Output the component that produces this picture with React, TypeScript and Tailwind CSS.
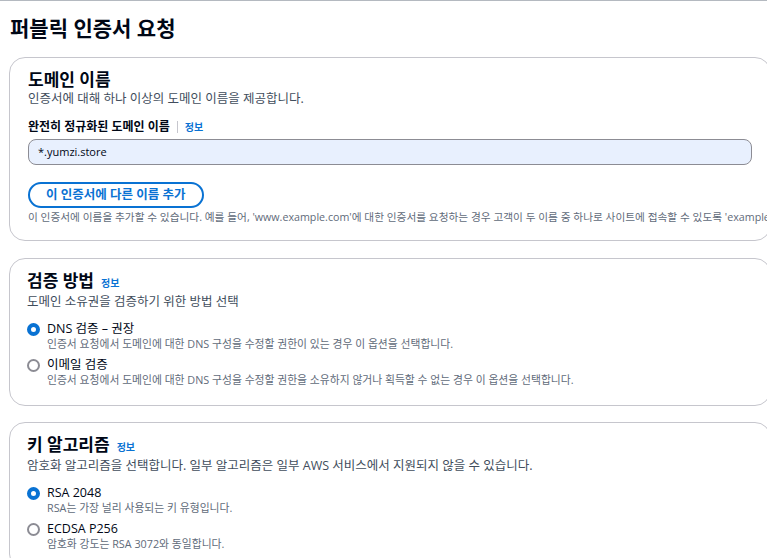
import React from "react";

const font = { fontFamily: '"Open Sans", "Noto Sans CJK KR", sans-serif' };

function Info() {
  return <span className="text-[10px] font-bold text-[#0972d3] leading-[22px]">정보</span>;
}

function Radio({ checked }: { checked: boolean }) {
  return checked ? (
    <span className="mt-[2px] h-[13px] w-[13px] shrink-0 rounded-full border-[4px] border-[#0972d3] bg-white" />
  ) : (
    <span className="mt-[2px] h-[13px] w-[13px] shrink-0 rounded-full border-[2px] border-[#8c8c94] bg-white" />
  );
}

function Option({ checked, label, sub }: { checked: boolean; label: string; sub: string }) {
  return (
    <div className="flex gap-[7px]">
      <Radio checked={checked} />
      <div className="flex flex-col">
        <div className="text-[12.5px] leading-[16px] text-[#000716]">{label}</div>
        <div className="text-[10.8px] leading-[14px] text-[#5f6b7a] whitespace-nowrap">{sub}</div>
      </div>
    </div>
  );
}

export default function App() {
  return (
    <div style={font} className="w-full h-[558px] overflow-hidden bg-white border-t border-[#b4b9c0]">
      <div className="pl-[9px]">
        <h1 className="pt-[13px] pl-[1px] text-[21px] leading-[28px] font-bold text-[#000716]">퍼블릭 인증서 요청</h1>

        <div className="mt-[15px] w-[762px] rounded-[16px] border border-[#c6c6cd] pl-[18px] pr-[18px] pt-[11px] pb-[16px]">
          <h2 className="text-[17px] leading-[22px] font-bold text-[#000716]">도메인 이름</h2>
          <p className="text-[12.5px] leading-[16px] text-[#414d5c]">인증서에 대해 하나 이상의 도메인 이름을 제공합니다.</p>
          <div className="mt-[12px] flex items-center h-[16px]">
            <span className="text-[12px] font-bold text-[#000716]">완전히 정규화된 도메인 이름</span>
            <span className="mx-[7px] h-[12px] w-px bg-[#c6c6cd]" />
            <span className="text-[10px] font-bold text-[#0972d3]">정보</span>
          </div>
          <div className="mt-[4px] flex h-[26px] items-center rounded-[8px] border border-[#8c8c94] bg-[#e8f0fe] pl-[9px] text-[11px] text-[#000716]">
            *.yumzi.store
          </div>
          <button className="mt-[17px] flex h-[26px] items-center rounded-full border-2 border-[#0972d3] px-[16px] text-[12.5px] font-bold text-[#0972d3]">
            이 인증서에 다른 이름 추가
          </button>
          <p className="mt-[2px] whitespace-nowrap text-[10.7px] leading-[14px] text-[#5f6b7a]">
            이 인증서에 이름을 추가할 수 있습니다. 예를 들어, 'www.example.com'에 대한 인증서를 요청하는 경우 고객이 두 이름 중 하나로 사이트에 접속할 수 있도록 'example.com'이라는 이름을 추가할 수 있습니다.
          </p>
        </div>

        <div className="mt-[17px] w-[762px] rounded-[16px] border border-[#c6c6cd] pl-[17px] pr-[18px] pt-[11px] pb-[18px]">
          <div className="flex items-baseline gap-[7px]">
            <h2 className="text-[17px] leading-[22px] font-bold text-[#000716]">검증 방법</h2>
            <Info />
          </div>
          <p className="text-[12.5px] leading-[16px] text-[#414d5c]">도메인 소유권을 검증하기 위한 방법 선택</p>
          <div className="mt-[11px] flex flex-col gap-[6px]">
            <Option checked label="DNS 검증 – 권장" sub="인증서 요청에서 도메인에 대한 DNS 구성을 수정할 권한이 있는 경우 이 옵션을 선택합니다." />
            <Option checked={false} label="이메일 검증" sub="인증서 요청에서 도메인에 대한 DNS 구성을 수정할 권한을 소유하지 않거나 획득할 수 없는 경우 이 옵션을 선택합니다." />
          </div>
        </div>

        <div className="mt-[16px] w-[762px] rounded-[16px] border border-[#c6c6cd] pl-[17px] pr-[18px] pt-[11px] pb-[18px]">
          <div className="flex items-baseline gap-[7px]">
            <h2 className="text-[17px] leading-[22px] font-bold text-[#000716]">키 알고리즘</h2>
            <Info />
          </div>
          <p className="text-[12.5px] leading-[16px] text-[#414d5c]">암호화 알고리즘을 선택합니다. 일부 알고리즘은 일부 AWS 서비스에서 지원되지 않을 수 있습니다.</p>
          <div className="mt-[11px] flex flex-col gap-[6px]">
            <Option checked label="RSA 2048" sub="RSA는 가장 널리 사용되는 키 유형입니다." />
            <Option checked={false} label="ECDSA P256" sub="암호화 강도는 RSA 3072와 동일합니다." />
          </div>
        </div>
      </div>
    </div>
  );
}
